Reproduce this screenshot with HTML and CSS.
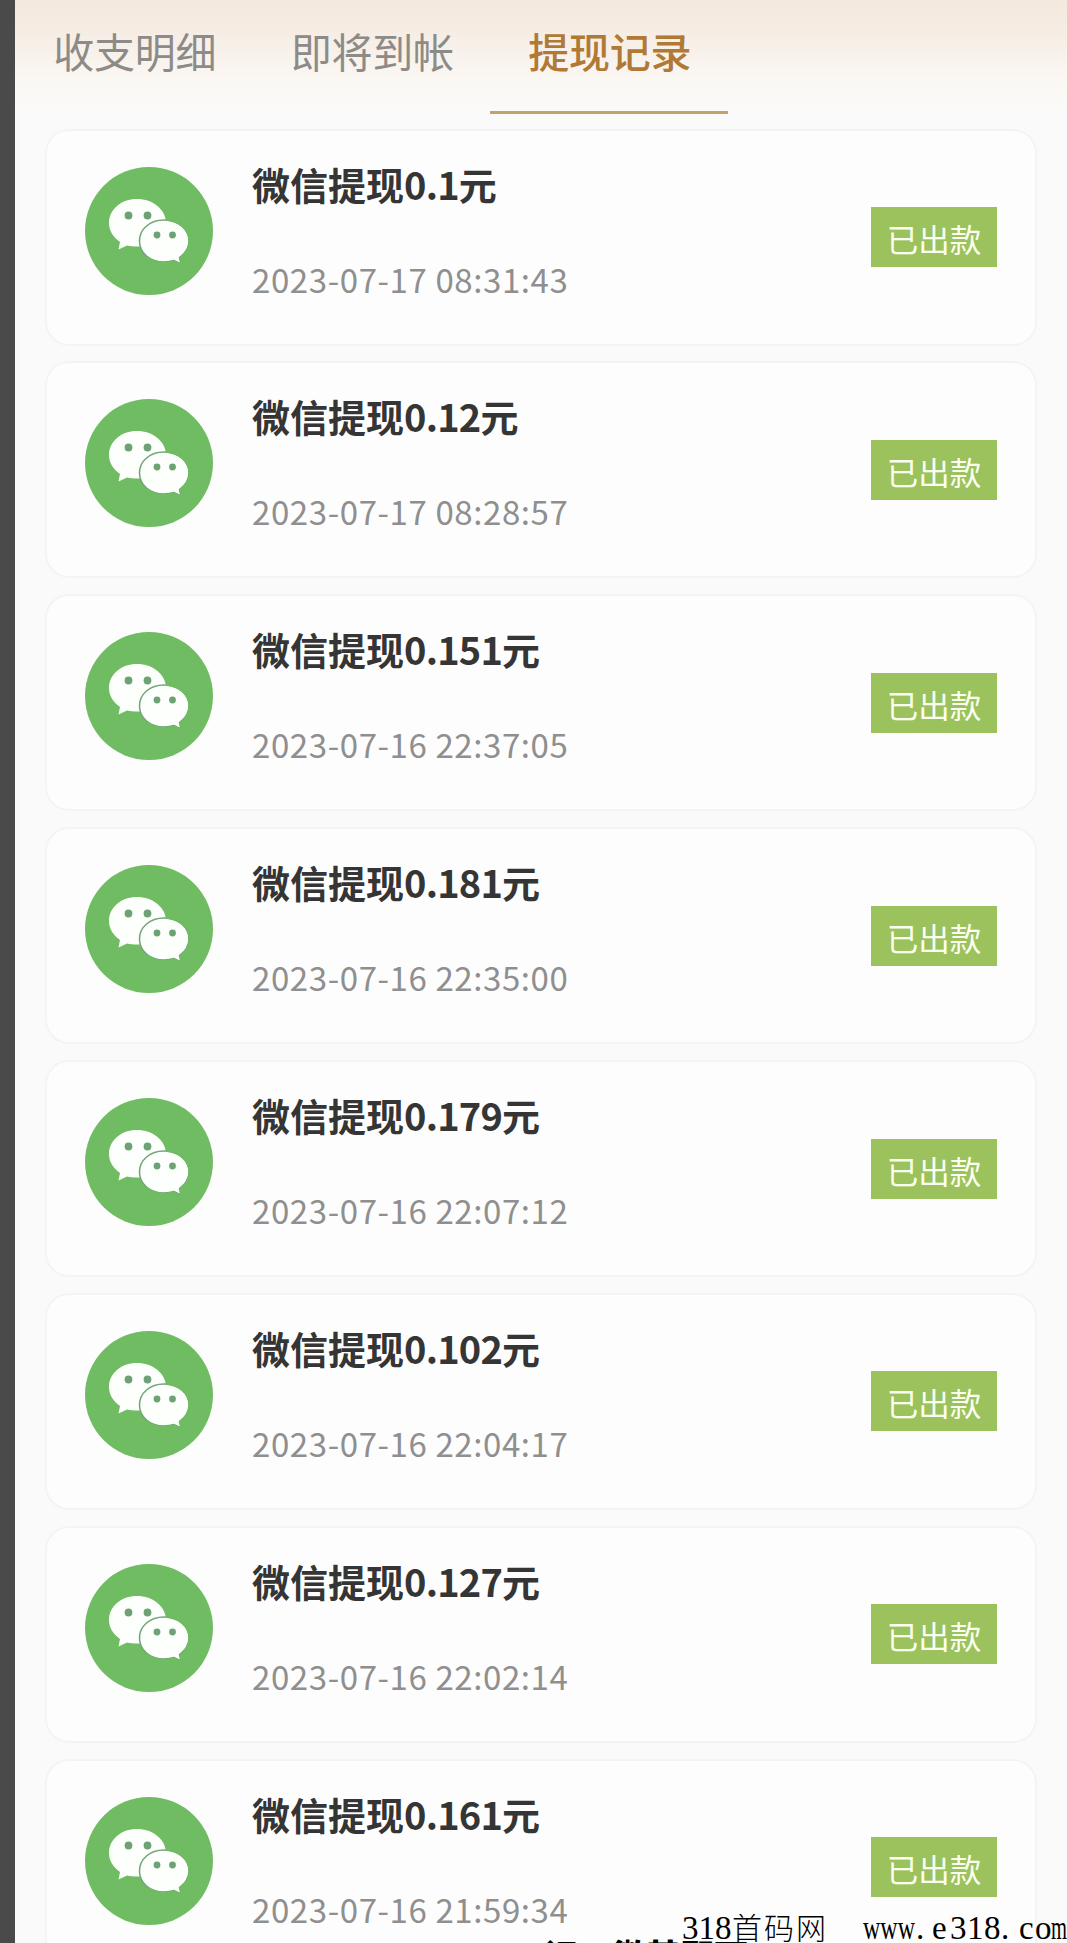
FILE: index.html
```html
<!DOCTYPE html>
<html lang="zh-CN">
<head>
<meta charset="utf-8">
<title>提现记录</title>
<link rel="stylesheet" href="styles.css">
</head>
<body>
<svg class="defs" aria-hidden="true">
  <symbol id="wechat" viewBox="0 0 128 128">
    <circle cx="64" cy="64" r="64" fill="#6fbc62"/>
    <path fill="#fdfffd" d="M52 32C36 32 24 42.500 24 56C24 63.500 28 70 35 75L33.500 82.500L42 78.500C45 79.300 49 79.500 52 79.500C68 79.500 81 70 81 56C81 42.500 68 32 52 32Z"/>
    <path fill="#fdfffd" stroke="#72a477" stroke-width="1.500" d="M79 53C65 53 54.500 62 54.500 74C54.500 86 65 95 79 95C82.500 95 86 94.500 89 93.500L96 97L94.500 90.500C100 86.500 104 81 104 74C104 62 93 53 79 53Z"/>
    <path fill="none" stroke="#6fbc62" stroke-width="2" d="M82 53C94 54 104.500 62 104.500 74C104.500 81 101 86.500 95.500 90.500L97 98.500L89 94.500C86 95.500 82.500 96 79 96C72 96 66 93.500 62 90"/>
    <g fill="#6da374"><circle cx="43.500" cy="48.500" r="3.900"/><circle cx="62.500" cy="48.500" r="3.900"/><circle cx="72" cy="68" r="3.400"/><circle cx="87.500" cy="68" r="3.400"/></g>
  </symbol>
</svg>
<div class="screen">
  <nav class="tabs">
    <a class="tab">收支明细</a>
    <a class="tab">即将到帐</a>
    <a class="tab active">提现记录</a>
  </nav>
  <main class="list">
    <article class="card"><svg class="logo"><use href="#wechat"/></svg><div class="info"><h2>微信提现<span class="num">0.1</span>元</h2><time>2023-07-17 08:31:43</time></div><span class="badge">已出款</span></article>
    <article class="card"><svg class="logo"><use href="#wechat"/></svg><div class="info"><h2>微信提现<span class="num">0.12</span>元</h2><time>2023-07-17 08:28:57</time></div><span class="badge">已出款</span></article>
    <article class="card"><svg class="logo"><use href="#wechat"/></svg><div class="info"><h2>微信提现<span class="num">0.151</span>元</h2><time>2023-07-16 22:37:05</time></div><span class="badge">已出款</span></article>
    <article class="card"><svg class="logo"><use href="#wechat"/></svg><div class="info"><h2>微信提现<span class="num">0.181</span>元</h2><time>2023-07-16 22:35:00</time></div><span class="badge">已出款</span></article>
    <article class="card"><svg class="logo"><use href="#wechat"/></svg><div class="info"><h2>微信提现<span class="num">0.179</span>元</h2><time>2023-07-16 22:07:12</time></div><span class="badge">已出款</span></article>
    <article class="card"><svg class="logo"><use href="#wechat"/></svg><div class="info"><h2>微信提现<span class="num">0.102</span>元</h2><time>2023-07-16 22:04:17</time></div><span class="badge">已出款</span></article>
    <article class="card"><svg class="logo"><use href="#wechat"/></svg><div class="info"><h2>微信提现<span class="num">0.127</span>元</h2><time>2023-07-16 22:02:14</time></div><span class="badge">已出款</span></article>
    <article class="card"><svg class="logo"><use href="#wechat"/></svg><div class="info"><h2>微信提现<span class="num">0.161</span>元</h2><time>2023-07-16 21:59:34</time></div><span class="badge">已出款</span></article>
  </main>
  <svg class="watermark" width="532" height="43" viewBox="0 0 532 43">
    <text class="under" x="9" y="69">记、微其即可</text>
    <text x="147" y="39">318</text>
    <text class="site" x="197 229 261" y="39">首码网</text>
    <text x="328" y="39" textLength="52" lengthAdjust="spacingAndGlyphs">www</text>
    <text x="381 397 415 432 449 466 484 500" y="39">.e318.co</text>
    <text x="516" y="39" textLength="16" lengthAdjust="spacingAndGlyphs">m</text>
  </svg>
</div>
</body>
</html>
```
FILE: styles.css
```css
* { box-sizing: border-box; }
body { margin: 0; background: #fafafa; font-family: "Noto Sans CJK SC", sans-serif; }
.defs { position: absolute; width: 0; height: 0; }
.screen {
  position: relative;
  height: 1943px;
  overflow: hidden;
  border-left: 15px solid #4a4a4a;
  background: linear-gradient(#f4e9dd 0, #f5ece3 25px, #fbf7f3 80px, #fafafa 112px);
}
.tabs { display: flex; height: 114px; }
.tab {
  width: 237.5px;
  height: 114px;
  padding: 0 0 10px 2px;
  border-bottom: 3px solid transparent;
  font-size: 41px;
  line-height: 101px;
  letter-spacing: -0.2px;
  text-align: center;
  color: #8d8b88;
}
.tab.active { color: #b07a36; border-color: #c3a16c; font-weight: 500; }
.list { display: flex; flex-direction: column; gap: 15.9px; padding: 14.5px 30px 0; }
.card {
  display: flex;
  flex: none;
  align-items: center;
  height: 217px;
  padding: 0 38px;
  border: 2px solid #f4f4f4;
  border-radius: 24px;
  background: #fdfdfd;
}
.logo { width: 128px; height: 128px; margin-top: -13px; }
.info { flex: 1; height: 213px; padding: 25px 0 0 39px; }
.info h2 { margin: 0; font-size: 38px; line-height: 56px; font-weight: 700; color: #353535; }
.num { letter-spacing: -0.8px; }
.info time {
  display: block;
  margin-top: 43px;
  font-size: 33px;
  line-height: 48px;
  letter-spacing: 0.6px;
  color: #8f8f8f;
}
.badge {
  width: 126px;
  height: 60px;
  background: #9bc25c;
  color: #fbfff0;
  font-size: 31.5px;
  line-height: 62px;
  text-align: center;
}
.watermark {
  position: absolute;
  left: 520px;
  top: 1900px;
  overflow: hidden;
  font-family: "Liberation Serif", "Noto Sans CJK SC", serif;
  font-size: 33px;
  fill: #000;
}
.site { font-size: 30px; font-weight: 300; }
.under { font-family: "Noto Sans CJK SC", sans-serif; font-size: 34px; font-weight: 900; }
```
